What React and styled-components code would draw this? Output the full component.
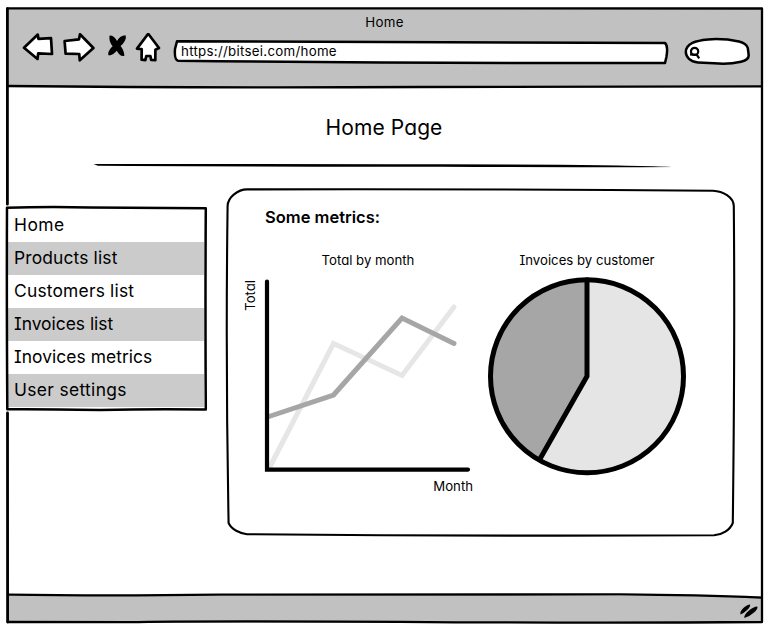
import React from 'react';
import styled, { createGlobalStyle } from 'styled-components';

const GlobalStyle = createGlobalStyle`
  * { box-sizing: border-box; }
  body {
    margin: 0;
    background: #fff;
    color: #000;
    font-family: Inter, "Liberation Sans", sans-serif;
    font-feature-settings: "cv08", "cv11";
  }
`;

const Window = styled.div`
  position: relative;
  display: flex;
  flex-direction: column;
  width: 756px;
  height: 615px;
  margin: 8px 0 10px 7px;
`;

const Outline = styled.svg`
  position: absolute;
  inset: 0;
  width: 100%;
  height: 100%;
  overflow: visible;
  pointer-events: none;
  fill: ${(p) => p.$fill || 'none'};
  stroke: #000;
  stroke-width: ${(p) => p.$weight || 3};
  stroke-linecap: round;
  stroke-linejoin: round;
`;

const Toolbar = styled.header`
  flex: none;
  height: 79px;
  background: #c1c1c1;
`;

const WindowTitle = styled.div`
  height: 25px;
  padding: 4px 1px 0 0;
  text-align: center;
  font-size: 13.3px;
  line-height: 20px;
  letter-spacing: 0.3px;
`;

const Controls = styled.div`
  display: flex;
  height: 30px;
  padding-left: 15px;
`;

const NavIcon = styled.svg`
  flex: none;
  width: ${(p) => p.$width}px;
  height: 30px;
  fill: #fff;
  stroke: #000;
  stroke-width: 2.7;
  stroke-linejoin: round;
  stroke-linecap: round;
`;

const AddressBar = styled.div`
  position: relative;
  width: 494px;
  height: 24px;
  margin: 7px 16px 0 0;
`;

const Address = styled.span`
  position: relative;
  display: block;
  padding-left: 7px;
  font-size: 13.3px;
  line-height: 23px;
  letter-spacing: 0.28px;
  white-space: nowrap;
`;

const SearchBox = styled.svg`
  width: 67px;
  height: 30px;
  margin-top: 4px;
  overflow: visible;
  fill: #fff;
  stroke: #000;
  stroke-width: 2.5;
`;

const Main = styled.main`
  flex: 1;
  background: #fff;
`;

const PageTitle = styled.h1`
  margin: 0;
  padding: 27px 2px 0 0;
  height: 73px;
  font-size: 21px;
  font-weight: 400;
  line-height: 28px;
  letter-spacing: 0.1px;
  text-align: center;
`;

const Rule = styled.svg`
  display: block;
  width: 584px;
  height: 10px;
  margin-left: 86px;
`;

const Columns = styled.div`
  display: grid;
  grid-template-columns: 200px 507px;
  column-gap: 21px;
  align-items: start;
  margin: 19px 0 0 -1px;
`;

const Menu = styled.nav`
  position: relative;
  height: 203px;
  margin-top: 18px;
  padding: 2px 2px 2px 1px;
  background: #fff;
`;

const MenuItem = styled.div`
  height: 33px;
  padding-left: 7px;
  background: ${(p) => (p.$shaded ? '#cbcbcb' : '#fff')};
  font-size: 17.4px;
  line-height: 32px;
  letter-spacing: ${(p) => p.$tracking}px;
  white-space: nowrap;
`;

const Card = styled.section`
  position: relative;
  height: 347px;
  padding: 16px 0 0 16px;
`;

const CardTitle = styled.h2`
  margin: 0 0 0 22px;
  font-size: 16.5px;
  font-weight: 600;
  line-height: 24px;
  letter-spacing: 0;
`;

const Charts = styled.div`
  display: grid;
  grid-template-columns: 230px 200px;
  column-gap: 14px;
  margin-top: 21px;
`;

const Figure = styled.figure`
  display: grid;
  grid-template-columns: ${(p) => (p.$axis ? '20px 210px' : '200px')};
  grid-template-rows: 20px 205px 20px;
  margin: 0;
`;

const Caption = styled.figcaption`
  grid-column: ${(p) => (p.$axis ? 2 : 1)};
  text-align: center;
  font-size: 13.2px;
  line-height: 20px;
  white-space: nowrap;
`;

const VerticalLabel = styled.span`
  grid-column: 1;
  justify-self: start;
  align-self: start;
  margin-top: 10px;
  margin-left: -1px;
  writing-mode: vertical-rl;
  transform: rotate(180deg);
  font-size: 13.2px;
  line-height: 16px;
`;

const HorizontalLabel = styled.span`
  grid-column: 2;
  text-align: right;
  font-size: 13.2px;
  line-height: 22px;
`;

const Plot = styled.svg`
  width: 100%;
  height: 205px;
  overflow: visible;
  fill: none;
  stroke-width: 5;
  stroke-linecap: round;
`;

const StatusBar = styled.footer`
  display: flex;
  justify-content: flex-end;
  flex: none;
  height: 27px;
  background: #c1c1c1;
`;

const Grip = styled.svg`
  width: 26px;
  height: 27px;
`;

const menu = [
  { label: 'Home', tracking: 0.5 },
  { label: 'Products list', tracking: 0.15 },
  { label: 'Customers list', tracking: 0.2 },
  { label: 'Invoices list', tracking: 0 },
  { label: 'Inovices metrics', tracking: 0.06 },
  { label: 'User settings', tracking: 0.35 },
];

export default function App() {
  return (
    <>
      <GlobalStyle />
      <Window>
        <Toolbar>
          <WindowTitle>Home</WindowTitle>
          <Controls>
            <NavIcon $width={36} viewBox="22 33 36 30">
              <path d="M24 47.8 37.8 34.6 38.4 38.8 51 38.2 52 54 38.2 53.4 37.5 59Z" />
            </NavIcon>
            <NavIcon $width={42} viewBox="58 33 42 30">
              <path d="M64.6 41 79 39.3 80 34.3 93.4 48 79.8 60.3 79.2 54 65.6 53.6Z" />
            </NavIcon>
            <NavIcon $width={32} viewBox="100 33 32 30">
              <path
                fill="#000"
                stroke="none"
                d="M109.6 35.4Q114.6 35.4 117 41Q120 35.6 125.6 35.3Q126.6 37.8 124.8 41Q123 44.2 120.6 46Q124 50 124.4 55.8Q120.4 57.4 116.8 50.8Q113.6 55 108.8 55.4Q107.4 53.8 109.2 50.4Q110.8 47.8 112.6 46.2Q108.4 40.6 109.6 35.4Z"
              />
            </NavIcon>
            <NavIcon $width={42} viewBox="132 33 42 30">
              <path d="M148.2 33.8 159 48 155.4 49.8 155.3 60.2 151.2 60 150.4 56 146.3 56 145.3 60.2 141.6 59.7 141.7 49.2 137 48.6Z" />
            </NavIcon>
            <AddressBar>
              <Outline viewBox="174 40 494 24" $weight={2.5} $fill="#fff">
                <path d="M177 41.3Q420 41.3 665 43Q668.4 46 666.4 57L665 63Q420 63.6 178 60.7Q174.2 60 175 49Z" />
              </Outline>
              <Address>https://bitsei.com/home</Address>
            </AddressBar>
            <SearchBox viewBox="684 37 67 30">
              <path d="M685.8 52C686 43 696 40.6 708 39.4Q724 38.3 739 41.5Q746.5 43.4 747.8 48L748.7 55Q749 60 741 61.8Q728 64.6 714 63.2L698 62.4C690 62 686 57 685.8 52Z" />
              <circle cx="694.6" cy="51.4" r="3.6" strokeWidth="2.2" />
              <path fill="none" strokeWidth="2.2" d="M690 54.3 696.8 54.8 699.2 58.3" />
            </SearchBox>
          </Controls>
        </Toolbar>

        <Main>
          <PageTitle>Home Page</PageTitle>
          <Rule viewBox="93 160 584 10">
            <path d="M93.5 164.1Q250 163.9 440 164.3L560 164.7Q650 165.6 675 167Q600 167.5 440 166.8Q200 166.4 98 165.7Z" />
          </Rule>
          <Columns>
            <Menu>
              {menu.map((item, i) => (
                <MenuItem key={item.label} $shaded={i % 2 === 1} $tracking={item.tracking}>
                  {item.label}
                </MenuItem>
              ))}
              <Outline viewBox="6 207 200 203" $weight={2.5}>
                <path d="M7 207.8Q45 206.4 90 207.4L205.8 208.2Q205.2 300 205.8 409.5Q150 408.8 100 410Q40 409 7.3 409.3Q6.6 300 7 207.8Z" />
              </Outline>
            </Menu>

            <Card>
              <Outline viewBox="227 189 507 347" $weight={2.1}>
                <path d="M227.6 206C227.8 197 238 189.4 247 189.4Q480 188.8 713 190.8C723 191.2 733.4 197 733.8 206Q735 340 732.8 523C730 530 722 535 714 535.3Q480 536.4 247 534.2C240 533.4 231.5 529.5 228.6 523Q225.5 360 227.6 206Z" />
              </Outline>
              <CardTitle>Some metrics:</CardTitle>
              <Charts>
                <Figure $axis>
                  <Caption $axis>Total by month</Caption>
                  <VerticalLabel>Total</VerticalLabel>
                  <Plot viewBox="263 270 210 205">
                    <path stroke="#e6e6e6" d="M269 468.5 333.5 343.5 402 375.5 454 307" />
                    <path stroke="#a6a6a6" d="M269 416.5 333.5 395 402 318 454 343.5" />
                    <path stroke="#000" strokeWidth="4.2" d="M267 281.5V469.6H468" />
                  </Plot>
                  <HorizontalLabel>Month</HorizontalLabel>
                </Figure>
                <Figure>
                  <Caption>Invoices by customer</Caption>
                  <Plot viewBox="487 270 200 205">
                    <circle cx="587" cy="376.3" r="96.5" fill="#e5e5e5" />
                    <path fill="#a6a6a6" d="M587 376.3 539.5 459.9A96.5 96.5 0 0 1 587 279.8Z" />
                    <circle cx="587" cy="376.3" r="96.5" stroke="#000" />
                    <path stroke="#000" strokeLinejoin="round" d="M587 280V376.3L539.8 459.3" />
                  </Plot>
                </Figure>
              </Charts>
            </Card>
          </Columns>
        </Main>

        <StatusBar>
          <Grip viewBox="737 596 26 27">
            <path d="M740.4 614.4Q739.8 611.4 743.4 608Q747.2 604.4 750 604.4Q750.8 606.4 747.4 609.8Q743.6 613.6 740.4 614.4Z" />
            <path d="M744.2 618Q744.2 614.6 748.4 611Q753.6 606.8 757.2 606.6Q758.4 608.4 754.6 612Q749.6 616.6 744.2 618Z" />
          </Grip>
        </StatusBar>

        <Outline viewBox="7 8 756 615" $weight={2.3}>
          <path d="M7.4 8.4Q390 8 762 8.5Q761.2 310 762 622Q600 623.4 400 621.8Q180 620.8 130 622.2L7.8 622" />
          <path strokeWidth="2.8" d="M7.4 8.6 7.4 204.2M7.5 413 7.6 622" />
          <path d="M8 86Q200 88 420 87Q600 86.4 761 86.4" />
          <path d="M8 594.6Q100 596.2 220 594.7Q450 594.5 620 594.4Q700 595 761 597.6" />
        </Outline>
      </Window>
    </>
  );
}
